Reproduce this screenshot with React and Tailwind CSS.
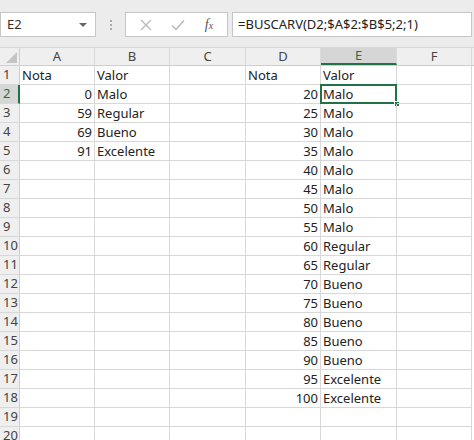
import React from 'react';

const cols = [
  { name: 'A', w: 'w-[75px]' },
  { name: 'B', w: 'w-[75px]' },
  { name: 'C', w: 'w-[76px]' },
  { name: 'D', w: 'w-[75px]' },
  { name: 'E', w: 'w-[76px]' },
  { name: 'F', w: 'w-[75px]' },
];

const tabla = [
  ['0', 'Malo'],
  ['59', 'Regular'],
  ['69', 'Bueno'],
  ['91', 'Excelente'],
];

const notas = [
  [20, 'Malo'], [25, 'Malo'], [30, 'Malo'], [35, 'Malo'], [40, 'Malo'], [45, 'Malo'],
  [50, 'Malo'], [55, 'Malo'], [60, 'Regular'], [65, 'Regular'], [70, 'Bueno'], [75, 'Bueno'],
  [80, 'Bueno'], [85, 'Bueno'], [90, 'Bueno'], [95, 'Excelente'], [100, 'Excelente'],
];

function rowData(r) {
  // devuelve [A, B, C, D, E, F] para la fila r (1-based)
  const out = ['', '', '', '', '', ''];
  if (r === 1) {
    out[0] = 'Nota'; out[1] = 'Valor'; out[3] = 'Nota'; out[4] = 'Valor';
    return out;
  }
  const t = tabla[r - 2];
  if (t) { out[0] = t[0]; out[1] = t[1]; }
  const n = notas[r - 2];
  if (n) { out[3] = String(n[0]); out[4] = n[1]; }
  return out;
}

function isNum(v) {
  return v !== '' && !isNaN(Number(v));
}

export default function App() {
  const rows = Array.from({ length: 20 }, (_, i) => i + 1);

  return (
    <div className="w-[474px] h-[440px] overflow-hidden bg-white font-['Noto_Sans',sans-serif] text-[13px] text-[#222]">
      {/* barra de fórmulas */}
      <div className="h-[48px] bg-[#ececec] flex items-start pt-[12px] border-b border-[#d6d6d6]">
        <div className="w-[96px] h-[25px] bg-white border border-[#c6c6c6] flex items-center justify-between pl-[6px] pr-[8px]">
          <span className="text-[13px] text-[#333]">E2</span>
          <span className="w-0 h-0 border-l-[4px] border-r-[4px] border-t-[4px] border-l-transparent border-r-transparent border-t-[#666]" />
        </div>
        <div className="w-[29px] h-[25px] flex flex-col items-center justify-center gap-[2px]">
          <span className="w-[2px] h-[2px] bg-[#aaa]" />
          <span className="w-[2px] h-[2px] bg-[#aaa]" />
          <span className="w-[2px] h-[2px] bg-[#aaa]" />
        </div>
        <div className="w-[103px] h-[25px] bg-white border border-[#c6c6c6] flex items-center justify-around px-[4px]">
          <svg width="12" height="12" viewBox="0 0 12 12">
            <path d="M1 1 L11 11 M11 1 L1 11" stroke="#b8b8b8" strokeWidth="1.3" fill="none" />
          </svg>
          <svg width="14" height="12" viewBox="0 0 14 12">
            <path d="M1 6.5 L5 10.5 L13 1.5" stroke="#b8b8b8" strokeWidth="1.5" fill="none" />
          </svg>
          <span className="font-['Liberation_Serif',serif] italic text-[14px] text-[#555] leading-none">f<span className="text-[10px]">x</span></span>
        </div>
        <div className="ml-[4px] w-[240px] h-[25px] bg-white border border-[#c6c6c6] flex items-center pl-[5px]">
          <span className="text-[13px] text-[#222]">=BUSCARV(D2;$A$2:$B$5;2;1)</span>
        </div>
      </div>

      {/* cabecera de columnas */}
      <div className="flex h-[18px] bg-[#efefef] border-b border-[#cfcfcf]">
        <div className="w-[20px] h-full border-r border-[#cfcfcf] relative">
          <span className="absolute right-[2px] bottom-[2px] w-0 h-0 border-l-[11px] border-t-[11px] border-l-transparent border-t-transparent border-b-0 border-r-0 [border-bottom-color:#c4c4c4] [border-right-color:#c4c4c4] border-solid" style={{ borderBottomWidth: 0 }} />
          <svg className="absolute right-[2px] bottom-[2px]" width="11" height="11" viewBox="0 0 11 11">
            <path d="M11 0 L11 11 L0 11 Z" fill="#c4c4c4" />
          </svg>
        </div>
        {cols.map((c) => (
          <div
            key={c.name}
            className={`${c.w} h-full border-r border-[#dadada] flex items-center justify-center text-[13px] ${
              c.name === 'E' ? 'bg-[#d6d6d6] text-[#217346] border-b-2 border-b-[#217346]' : 'text-[#444]'
            }`}
          >
            {c.name}
          </div>
        ))}
      </div>

      {/* filas */}
      {rows.map((r) => {
        const data = rowData(r);
        return (
          <div key={r} className="flex h-[19px]">
            <div
              className={`w-[20px] h-full border-b border-[#d8d8d8] flex items-center pl-[3px] text-[13px] ${
                r === 2 ? 'bg-[#d6d6d6] text-[#217346] border-r-2 border-r-[#217346]' : 'bg-[#efefef] text-[#444] border-r border-r-[#cfcfcf]'
              }`}
            >
              {r}
            </div>
            {cols.map((c, i) => {
              const v = data[i];
              const sel = r === 2 && c.name === 'E';
              return (
                <div
                  key={c.name}
                  className={`${c.w} h-full border-r border-b border-[#d8d8d8] flex items-center leading-none whitespace-nowrap relative ${
                    isNum(v) ? 'justify-end pr-[2px]' : 'justify-start pl-[2px]'
                  }`}
                >
                  {v}
                  {sel && (
                    <>
                      <span className="absolute -left-[1px] -top-[1px] right-[-1px] bottom-[-1px] border-2 border-[#217346]" />
                      <span className="absolute right-[-4px] bottom-[-4px] w-[6px] h-[6px] bg-[#217346] border border-white" />
                    </>
                  )}
                </div>
              );
            })}
          </div>
        );
      })}
    </div>
  );
}
